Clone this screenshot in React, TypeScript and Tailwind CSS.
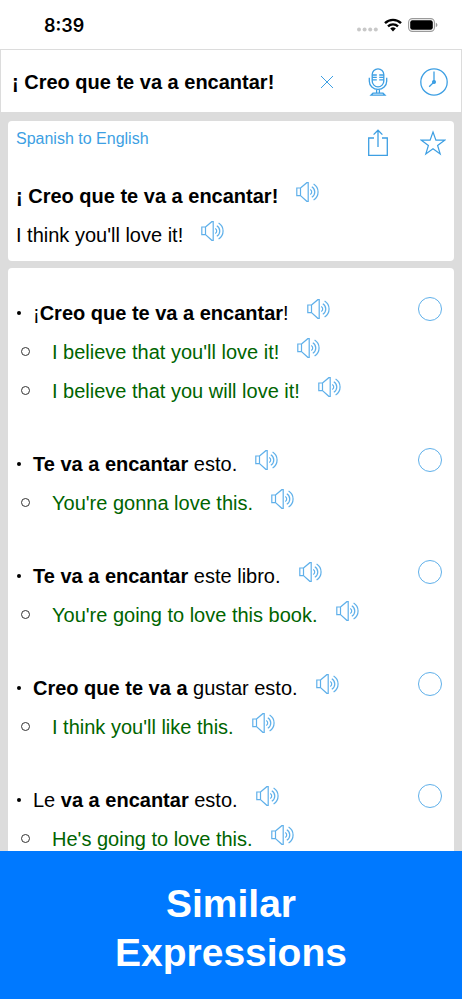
import { ReactNode } from "react";

type Phrase = {
  id: string;
  source: ReactNode;
  translations: string[];
};

const phrases: Phrase[] = [
  {
    id: "creo",
    source: (
      <>
        ¡<b>Creo que te va a encantar</b>!
      </>
    ),
    translations: [
      "I believe that you'll love it!",
      "I believe that you will love it!",
    ],
  },
  {
    id: "esto",
    source: (
      <>
        <b>Te va a encantar</b> esto.
      </>
    ),
    translations: ["You're gonna love this."],
  },
  {
    id: "libro",
    source: (
      <>
        <b>Te va a encantar</b> este libro.
      </>
    ),
    translations: ["You're going to love this book."],
  },
  {
    id: "gustar",
    source: (
      <>
        <b>Creo que te va a</b> gustar esto.
      </>
    ),
    translations: ["I think you'll like this."],
  },
  {
    id: "le",
    source: (
      <>
        Le <b>va a encantar</b> esto.
      </>
    ),
    translations: ["He's going to love this."],
  },
];

const SpeakerButton = () => (
  <button type="button" aria-label="Listen" className="mb-2 ml-[18px] shrink-0 text-[#5fb0ea]">
    <svg width="24" height="20" viewBox="0 0 24 20" fill="none" stroke="currentColor" strokeWidth="1.2">
      <path d="M4.500 6H.8v7.600h3.700zM4.500 6 10.800.7h1.400v18.600h-1.400L4.500 13.600" />
      <path d="M14.200 7.400a3 3 0 0 1 0 5.200M15.800 4.700a6.200 6.200 0 0 1 0 10.600M17.600 2a9.400 9.400 0 0 1 0 16" />
    </svg>
  </button>
);

const StatusBar = () => (
  <div className="flex h-[49px] items-center justify-between pl-11 pr-6">
    <span className="pt-0.5 font-[Inter] text-lg font-semibold">8:39</span>
    <div className="flex items-center">
      <svg width="21" height="14" viewBox="0 0 21 14" fill="#c8c8c8" className="mr-1.5">
        <circle cx="2" cy="11.5" r="2" />
        <circle cx="7.6" cy="11.5" r="2" />
        <circle cx="13.2" cy="11.5" r="2" />
        <circle cx="18.8" cy="11.5" r="2" />
      </svg>
      <svg width="18" height="14" viewBox="0 0 18 14" fill="none" stroke="#000" strokeWidth="2.4">
        <path d="M1 5.2a11.4 11.4 0 0 1 16 0M4 8.4a7.2 7.2 0 0 1 10 0" />
        <path d="M6.2 10.6a4.2 4.2 0 0 1 5.6 0L9 13.4z" fill="#000" stroke="none" />
      </svg>
      <svg width="30" height="14" viewBox="0 0 30 14" className="ml-1.5">
        <rect x=".6" y=".6" width="25.8" height="12.8" rx="3.8" fill="none" stroke="#9a9a9a" strokeWidth="1.1" />
        <rect x="2.2" y="2.2" width="22.6" height="9.6" rx="2.2" />
        <path d="M27.8 4.8v4.4c1-.4 1.6-1.2 1.6-2.2s-.6-1.8-1.6-2.2z" fill="#9a9a9a" />
      </svg>
    </div>
  </div>
);

const SearchBar = () => (
  <header className="flex h-16 items-center border border-[#dcdcdc] pl-[11px] pr-[13px] pt-px text-[#3d9fe3]">
    <input
      type="text"
      aria-label="Phrase to translate"
      defaultValue="¡ Creo que te va a encantar!"
      className="min-w-0 flex-1 font-bold text-black outline-none"
    />
    <button type="button" aria-label="Clear" className="mr-[34px]">
      <svg width="14" height="14" viewBox="0 0 14 14" fill="none" stroke="currentColor">
        <path d="m1 1 12 12M13 1 1 13" />
      </svg>
    </button>
    <button type="button" aria-label="Speak" className="mr-8">
      <svg width="20" height="28" viewBox="0 0 20 28" fill="none" stroke="currentColor" strokeWidth="1.3">
        <rect x="4.2" y=".8" width="11.6" height="18" rx="5.8" />
        <path d="M4.2 7h4.6M4.2 9.4h4.6M4.2 11.8h4.6M11.2 7h4.6M11.2 9.4h4.6M11.2 11.8h4.6" />
        <path d="M1.3 9.8v3.4a8.7 8.2 0 0 0 17.4 0V9.8" />
        <path d="M8.6 21.4v3.8M11.4 21.4v3.8M5 25.2h10l2 2H3z" />
      </svg>
    </button>
    <button type="button" aria-label="History">
      <svg width="28" height="28" viewBox="0 0 28 28" fill="none" stroke="currentColor" strokeWidth="1.3">
        <circle cx="14" cy="14" r="13.2" />
        <path d="M14 3.4V14l-4.8 4.8" />
        <circle cx="14" cy="14" r="1.4" fill="currentColor" />
      </svg>
    </button>
  </header>
);

const TranslationCard = () => (
  <section className="rounded bg-white px-2 pb-[7px] pt-2">
    <div className="flex h-[47px] items-start justify-between text-[#3d9fe3]">
      <a href="#languages" className="text-base leading-5">
        Spanish to English
      </a>
      <div className="flex">
        <button type="button" aria-label="Share" className="mr-8">
          <svg width="20" height="28" viewBox="0 0 20 28" fill="none" stroke="currentColor" strokeWidth="1.3">
            <path d="M6 9H.7v17.400h18.600V9H14M10 1.300V18M5.600 5.600 10 1.200l4.400 4.400" />
          </svg>
        </button>
        <button type="button" aria-label="Favorite">
          <svg width="26" height="26" viewBox="0 0 26 26" fill="none" stroke="currentColor" strokeWidth="1.2">
            <path d="m13 2 2.900 8.200h8.700l-7 5.300 2.600 8.500-7.200-5.200L5.800 24l2.600-8.500-7-5.300h8.700z" />
          </svg>
        </button>
      </div>
    </div>
    <div className="flex h-[39px] items-center">
      <b>¡ Creo que te va a encantar!</b>
      <SpeakerButton />
    </div>
    <div className="flex h-[39px] items-center">
      <span>I think you'll love it!</span>
      <SpeakerButton />
    </div>
  </section>
);

const PhraseItem = ({ phrase }: { phrase: Phrase }) => (
  <li>
    <div className="flex h-[39px] items-center">
      <span className="ml-[9px] mr-3 size-1 shrink-0 rounded-full bg-black" />
      <label htmlFor={phrase.id}>{phrase.source}</label>
      <SpeakerButton />
      <input
        id={phrase.id}
        type="checkbox"
        className="mb-2 ml-auto mr-3 size-6 appearance-none rounded-full border border-[#5fb0ea] checked:bg-[#5fb0ea]"
      />
    </div>
    <ul>
      {phrase.translations.map((text) => (
        <li key={text} className="flex h-[39px] items-center text-[#006400]">
          <span className="ml-[13px] mr-[22px] size-[9px] shrink-0 rounded-full border border-[#333]" />
          <span>{text}</span>
          <SpeakerButton />
        </li>
      ))}
    </ul>
  </li>
);

export default function App() {
  return (
    <div className="flex h-screen flex-col bg-white font-['Liberation_Sans',sans-serif] text-xl text-black">
      <StatusBar />
      <SearchBar />
      <main className="flex min-h-0 flex-1 flex-col gap-[7px] overflow-hidden bg-[#dcdcdc] px-2 pt-2">
        <TranslationCard />
        <ul className="flex shrink-0 flex-col gap-[34px] rounded bg-white pt-[25px]">
          {phrases.map((phrase) => (
            <PhraseItem key={phrase.id} phrase={phrase} />
          ))}
        </ul>
      </main>
      <footer className="mb-px bg-[#0079ff] px-24 pb-[22px] pt-7 text-center text-white">
        <h1 className="text-[39px] font-bold leading-[49px]">Similar Expressions</h1>
      </footer>
    </div>
  );
}
